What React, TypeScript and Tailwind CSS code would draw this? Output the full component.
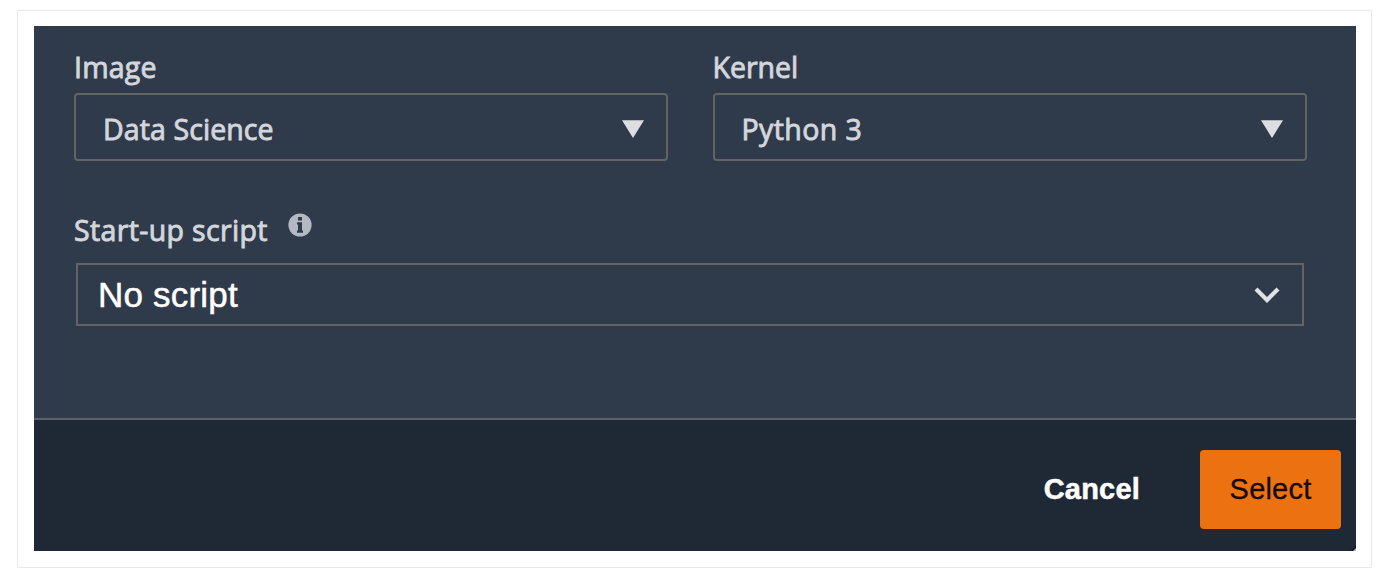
import type { ReactNode } from "react";

function Field({ label, value, labelClass, valueClass }: { label: string; value: string; labelClass: string; valueClass: string }) {
  return (
    <div className="w-[594px]">
      <div className="flex h-[67px] items-end pb-[6px] leading-10 text-[#d3d6dc]">
        <span className={labelClass}>{label}</span>
      </div>
      <button className="flex h-[68px] w-full items-center justify-between rounded-[4px] border-2 border-[#626366] pr-[21px] pl-[27px] text-[#d3d6dc]">
        <span className={valueClass}>{value}</span>
        <svg className="mt-[3px]" width="24" height="20" viewBox="0 0 24 20" fill="#dcdee2">
          <path d="M1 1.2H23L12 19Z" />
        </svg>
      </button>
    </div>
  );
}

function Footer({ children }: { children: ReactNode }) {
  return (
    <div className="relative flex h-[133px] items-center justify-end overflow-hidden border-t-2 border-[#5f6165] bg-[#1f2935] pt-[7px] pr-[15px]">
      {children}
      <svg className="absolute right-0 bottom-0" width="5" height="5" viewBox="0 0 5 5">
        <path d="M0 5L5 0V5Z" fill="#0c1119" />
        <path d="M2 5L5 2V5Z" fill="#b5b8bc" />
      </svg>
    </div>
  );
}

export default function App() {
  return (
    <div className="h-[582px] w-[1383px] overflow-hidden bg-white pt-[10px] pl-[17px] font-['Open_Sans',sans-serif] text-[28.5px] font-medium">
      <div className="h-[558px] w-[1355px] rounded-[2px] border border-[#e8e8e8] px-[16px] py-[15px]">
        <div className="h-[525px] w-[1322px]">
          <div className="h-[392px] bg-[#2f3a4a] pl-10 [-webkit-text-stroke:0.9px_#d3d6dc]">
            <div className="flex gap-[44.5px]">
              <Field label="Image" value="Data Science" labelClass="tracking-[0.2px]" valueClass="mt-[4px] tracking-[0.1px]" />
              <Field label="Kernel" value="Python 3" labelClass="" valueClass="mt-[4px] tracking-[0.4px]" />
            </div>
            <div className="flex h-[102px] items-center pt-[36px] text-[#d3d6dc]">
              <span className="w-[214px] tracking-[0.35px] whitespace-nowrap">Start-up script</span>
              <svg className="mb-[11px]" width="24" height="24" viewBox="0 0 24 24" stroke="none">
                <circle cx="12" cy="12" r="11.6" fill="#b3b9c2" />
                <path d="M10 4H14V7.4H10ZM9 9.2H14V17.6H15V19.8H9V17.6H10V11.4H9Z" fill="#2f3a4a" />
              </svg>
            </div>
            <button className="ml-[2px] flex h-[63px] w-[1228px] items-center justify-between border-2 border-[#626366] pr-[22px] pl-[20px] font-['Liberation_Sans',sans-serif] text-[35px] font-normal tracking-[0.2px] text-white [-webkit-text-stroke:0.5px_white]">
              <span className="mt-[2px]">No script</span>
              <svg width="26" height="18" viewBox="0 0 26 18" fill="none" stroke="#dfe2e6" strokeWidth="4.2">
                <path d="M2 3L13 14L24 3" />
              </svg>
            </button>
          </div>
          <Footer>
            <button className="mt-[2px] mr-[60px] font-['Liberation_Sans',sans-serif] text-[29px] font-bold tracking-[0.2px] text-white [-webkit-text-stroke:0.5px_white]">Cancel</button>
            <button className="h-[79px] w-[141px] rounded-[4px] bg-[#ec7211] pt-[2px] font-['Liberation_Sans',sans-serif] text-[29px] font-normal tracking-[0.2px] text-[#150b08] [-webkit-text-stroke:0.3px_#150b08]">Select</button>
          </Footer>
        </div>
      </div>
    </div>
  );
}
